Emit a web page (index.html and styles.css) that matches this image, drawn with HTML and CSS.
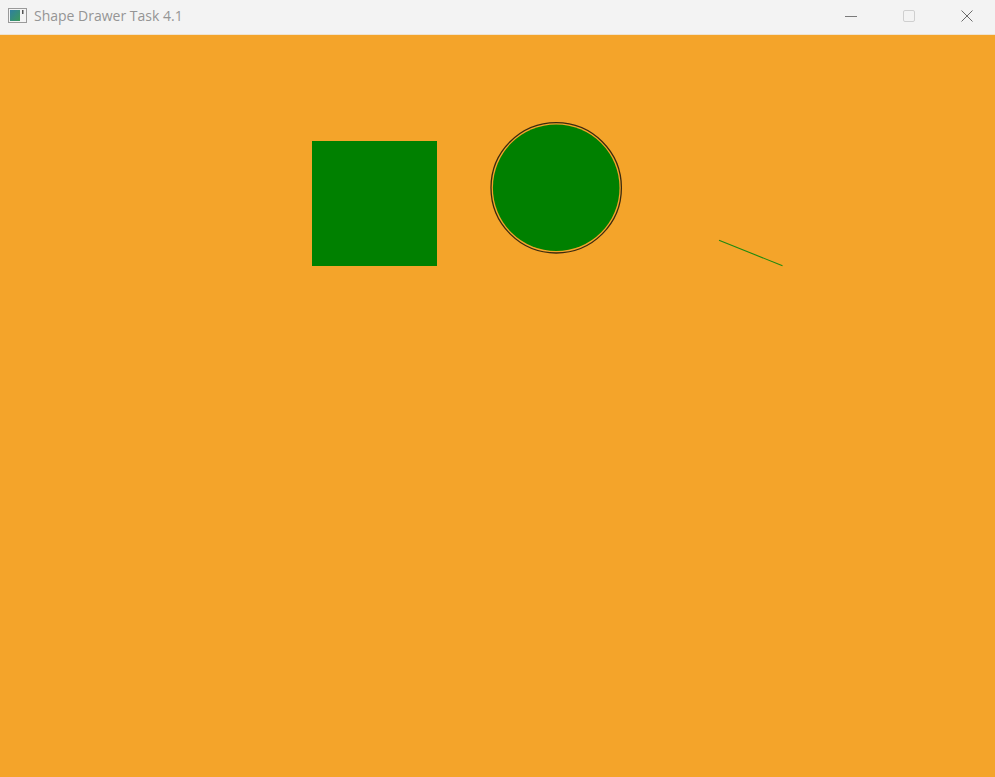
FILE: index.html
```html
<!DOCTYPE html>
<html>
<head>
<meta charset="utf-8">
<link rel="stylesheet" href="styles.css">
</head>
<body>
<div class="window">
  <div class="titlebar">
    <svg class="app-icon" width="19" height="15" viewBox="0 0 19 15">
      <defs>
        <linearGradient id="g" x1="0" y1="0" x2="1" y2="1">
          <stop offset="0" stop-color="#2f7fa0"/>
          <stop offset="1" stop-color="#3c9a5a"/>
        </linearGradient>
      </defs>
      <rect x="0.5" y="0.5" width="18" height="14" fill="#f4f4f4" stroke="#9a9a9a"/>
      <rect x="2" y="2" width="10" height="11" fill="url(#g)"/>
      <rect x="14" y="2" width="1.5" height="4" fill="#555"/>
    </svg>
    <span class="title">Shape Drawer Task 4.1</span>
    <div class="controls">
      <div class="ctl">
        <svg width="12" height="12" viewBox="0 0 12 12"><line x1="0" y1="6.5" x2="12" y2="6.5" stroke="#7a7a7a" stroke-width="1"/></svg>
      </div>
      <div class="ctl">
        <svg width="12" height="12" viewBox="0 0 12 12"><rect x="0.5" y="0.5" width="11" height="11" rx="1.5" fill="none" stroke="#cfcfcf" stroke-width="1"/></svg>
      </div>
      <div class="ctl">
        <svg width="12" height="12" viewBox="0 0 12 12"><path d="M0.5 0.5 L11.5 11.5 M11.5 0.5 L0.5 11.5" stroke="#6a6a6a" stroke-width="1"/></svg>
      </div>
    </div>
  </div>
  <div class="canvas">
    <svg class="drawing" width="995" height="742" viewBox="0 0 995 742">
      <rect x="312" y="106" width="125" height="125" fill="#008000"/>
      <circle cx="556.2" cy="152.8" r="65.2" fill="none" stroke="#3b2a0e" stroke-width="1.3"/>
      <circle cx="556.2" cy="152.8" r="63.3" fill="#008000"/>
      <line x1="719" y1="205.3" x2="782.5" y2="230.7" stroke="#1f8a10" stroke-width="1.1"/>
    </svg>
  </div>
</div>
</body>
</html>
```
FILE: styles.css
```css
html, body {
  margin: 0;
  padding: 0;
  width: 995px;
  height: 777px;
  overflow: hidden;
}
.window {
  display: flex;
  flex-direction: column;
  width: 995px;
  height: 777px;
}
.titlebar {
  height: 35px;
  flex: 0 0 35px;
  background: #f3f3f3;
  display: flex;
  align-items: center;
  box-sizing: border-box;
  border-bottom: 1px solid #efe3cf;
}
.app-icon {
  margin-left: 8px;
  margin-top: -3px;
  display: block;
}
.title {
  margin-left: 7px;
  font-family: "Open Sans", "Liberation Sans", sans-serif;
  font-size: 14px;
  color: #959595;
  margin-top: -3px;
}
.controls {
  margin-left: auto;
  display: flex;
  height: 100%;
  margin-right: -1px;
}
.ctl {
  width: 58px;
  height: 100%;
  display: flex;
  align-items: center;
  justify-content: center;
  padding-bottom: 3px;
  box-sizing: border-box;
}
.ctl svg {
  display: block;
}
.canvas {
  flex: 1;
  background: #f4a42a;
  position: relative;
}
.drawing {
  display: block;
}
```
